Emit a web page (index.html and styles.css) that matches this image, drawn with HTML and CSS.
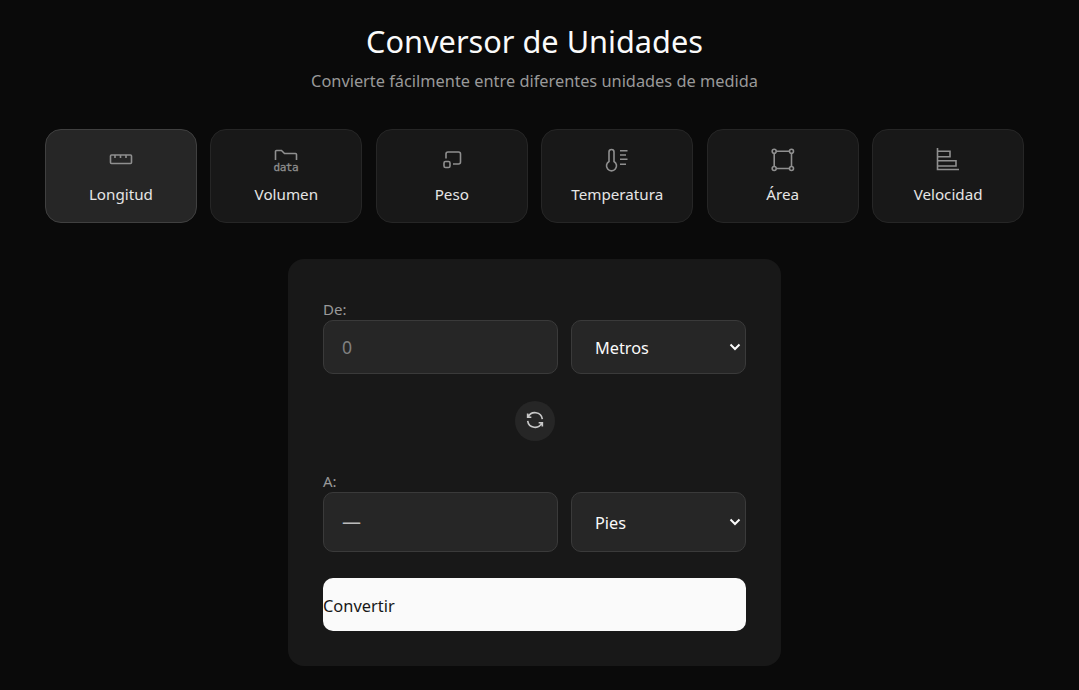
FILE: index.html
```html
<!DOCTYPE html>
<html lang="es">

<head>
    <meta charset="UTF-8">
    <meta name="viewport" content="width=device-width, initial-scale=1.0">
    <title>Conversor de Unidades</title>
    <link rel="stylesheet" href="styles.css">
</head>

<body>
    <div class="wrap">
        <header class="header">
            <h1>Conversor de Unidades</h1>
            <p>Convierte fácilmente entre diferentes unidades de medida</p>
        </header>

        <!-- tipos de unidad -->
        <div class="tabs">
            <button class="tab active" type="button">
                <svg class="tabIcon" viewBox="0 0 24 24"><rect x="1.500" y="7" width="21" height="8.500" rx="1"/><path d="M6 7v3M11.500 7v3M17 7v3"/></svg>
                <span>Longitud</span>
            </button>
            <button class="tab" type="button">
                <svg class="tabIcon" viewBox="0 0 24 24"><path d="M1.500 12V3.500a1 1 0 0 1 1-1h5l3 3h11a1 1 0 0 1 1 1V12"/><text class="iconText" x="12" y="23" textLength="25">data</text></svg>
                <span>Volumen</span>
            </button>
            <button class="tab" type="button">
                <svg class="tabIcon" viewBox="0 0 24 24"><rect x="4" y="13.500" width="6" height="6" rx="1.500"/><path d="M6 10.500V6a2 2 0 0 1 2-2h10.500a2 2 0 0 1 2 2v8a2 2 0 0 1-2 2H13"/></svg>
                <span>Peso</span>
            </button>
            <button class="tab" type="button">
                <svg class="tabIcon" viewBox="0 0 24 24"><path d="M4 13.500V4a2.500 2.500 0 0 1 5 0v9.500a5 5 0 1 1-5 0z"/><path d="M15 2.700h7.500M15 7h6M15 11.300h7.500M15 16.300h6"/></svg>
                <span>Temperatura</span>
            </button>
            <button class="tab" type="button">
                <svg class="tabIcon" viewBox="0 0 24 24"><circle cx="3.200" cy="3.200" r="2"/><circle cx="20.500" cy="3.200" r="2"/><circle cx="3.200" cy="20.500" r="2"/><circle cx="20.500" cy="20.500" r="2"/><path d="M5.200 3.200h13.300M5.200 20.500h13.300M3.200 5.200v13.300M20.500 5.200v13.300"/></svg>
                <span>Área</span>
            </button>
            <button class="tab" type="button">
                <svg class="tabIcon" viewBox="0 0 24 24"><path d="M1.500 0v21.500h21.500"/><path d="M1.500 3.200H14v5.500H1.500M1.500 12.700H20v5.300H1.500"/></svg>
                <span>Velocidad</span>
            </button>
        </div>

        <div class="card">
            <label class="fieldLabel" for="fromValue">De:</label>
            <div class="row">
                <input class="field" id="fromValue" type="text" placeholder="0">
                <div class="selectBox">
                    <select class="unit">
                        <option>Metros</option>
                        <option>Pies</option>
                    </select>
                    <svg class="chevron" viewBox="0 0 12 8"><path d="M1.500 1.500 6 6l4.500-4.500"/></svg>
                </div>
            </div>

            <div class="swapRow">
                <button class="swap" type="button" aria-label="Intercambiar">
                    <svg viewBox="0 0 24 24"><path d="M20 11a8.100 8.100 0 0 0-15.500-2m-.5-4v4h4"/><path d="M4 13a8.100 8.100 0 0 0 15.500 2m.5 4v-4h-4"/></svg>
                </button>
            </div>

            <span class="fieldLabel">A:</span>
            <div class="row resultRow">
                <div class="field result">—</div>
                <div class="selectBox">
                    <select class="unit">
                        <option>Pies</option>
                        <option>Metros</option>
                    </select>
                    <svg class="chevron" viewBox="0 0 12 8"><path d="M1.500 1.500 6 6l4.500-4.500"/></svg>
                </div>
            </div>

            <button class="convert" type="button">Convertir</button>
        </div>
    </div>
</body>

</html>
```

FILE: styles.css
```css
* {
    padding: 0;
    margin: 0;
    box-sizing: border-box;
}

body {
    background: #0a0a0a;
    color: #fafafa;
    font-family: "Noto Sans", "Open Sans", sans-serif;
}

.wrap {
    width: 979px;
    margin-left: 45px;
    padding-top: 19px;
}

.header {
    text-align: center;
}

.header h1 {
    font-size: 30.700px;
    font-weight: 400;
    line-height: 44px;
}

.header p {
    color: #999;
    font-size: 16.350px;
    line-height: 24px;
    margin-top: 6px;
}

.tabs {
    display: grid;
    grid-template-columns: repeat(6, 1fr);
    gap: 13.600px;
    margin-top: 36px;
}

.tab {
    height: 94px;
    display: flex;
    flex-direction: column;
    align-items: center;
    padding-top: 18px;
    gap: 11px;
    background: #181818;
    border: 1px solid #262626;
    border-radius: 16px;
    color: #e5e5e5;
    font: inherit;
    font-size: 15.200px;
    line-height: 22px;
}

.tab.active {
    background: #262626;
    border-color: #404040;
}

.tabIcon {
    width: 24px;
    height: 24px;
    overflow: visible;
    fill: none;
    stroke: #8f8f8f;
    stroke-width: 1.600;
}

.tabIcon .iconText {
    fill: #8f8f8f;
    stroke: #8f8f8f;
    stroke-width: 0.300;
    font-family: "DejaVu Sans Mono", monospace;
    font-size: 11px;
    text-anchor: middle;
}

.card {
    width: 493px;
    height: 407px;
    margin: 36px auto 0;
    padding: 39px 35px 35px;
    background: #181818;
    border-radius: 16px;
}

.fieldLabel {
    display: block;
    color: #999;
    font-size: 15px;
    line-height: 22px;
}

.row {
    display: grid;
    grid-template-columns: 235px 175px;
    gap: 13px;
    height: 54px;
}

.resultRow {
    height: 60px;
}

.field {
    width: 100%;
    height: 100%;
    padding: 0 18px;
    background: #262626;
    border: 1px solid #3a3a3a;
    border-radius: 10px;
    color: #bbb;
    font: inherit;
    font-size: 17.600px;
    outline: none;
}

.field::placeholder {
    color: #808080;
}

.result {
    display: flex;
    align-items: center;
    font-size: 19px;
}

.selectBox {
    position: relative;
}

.unit {
    width: 100%;
    height: 100%;
    padding: 2px 23px 0;
    appearance: none;
    background: #262626;
    border: 1px solid #3a3a3a;
    border-radius: 10px;
    color: #fafafa;
    font: inherit;
    font-size: 16.300px;
}

.chevron {
    position: absolute;
    right: 5px;
    top: 50%;
    width: 12px;
    height: 8px;
    margin-top: -4px;
    fill: none;
    stroke: #fafafa;
    stroke-width: 2;
}

.swapRow {
    display: flex;
    justify-content: center;
    padding: 27px 0 29px;
}

.swap {
    width: 40px;
    height: 40px;
    display: flex;
    align-items: center;
    justify-content: center;
    background: #262626;
    border: none;
    border-radius: 50%;
}

.swap svg {
    width: 22px;
    height: 22px;
    margin-top: -2px;
    fill: none;
    stroke: #c8c8c8;
    stroke-width: 1.800;
}

.convert {
    display: block;
    width: 100%;
    height: 53px;
    margin-top: 26px;
    padding-top: 2px;
    background: #fafafa;
    border: none;
    border-radius: 10px;
    color: #171717;
    font: inherit;
    font-size: 16.400px;
    text-align: left;
}
```
